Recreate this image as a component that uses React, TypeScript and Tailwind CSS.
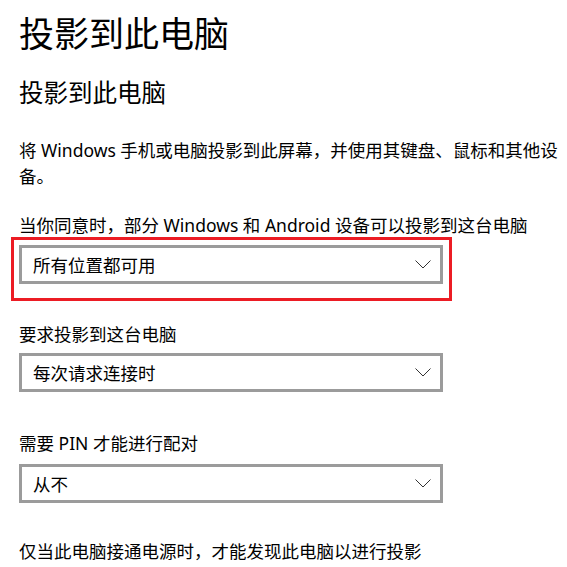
import React from "react";

const font = { fontFamily: '"Noto Sans", "Noto Sans CJK SC", sans-serif' };

function Chevron() {
  return (
    <svg width="16" height="9" viewBox="0 0 16 9" fill="none" className="shrink-0">
      <path d="M0.5 0.5 L8 8 L15.5 0.5" stroke="#333" strokeWidth="1" />
    </svg>
  );
}

function Select({ value }: { value: string }) {
  return (
    <div className="w-[424px] h-[39px] border-[3px] border-[#9b9b9b] bg-white flex items-center justify-between pl-[11px] pr-[9px]">
      <span className="text-[17.5px] leading-[26px] text-black">{value}</span>
      <Chevron />
    </div>
  );
}

export default function App() {
  return (
    <div className="w-[567px] h-[567px] bg-white overflow-hidden pl-[19px] text-black" style={font}>
      <div className="pt-[12px] text-[35px] leading-[44px] whitespace-nowrap">投影到此电脑</div>
      <div className="mt-[20px] text-[24.5px] leading-[34px] whitespace-nowrap">投影到此电脑</div>
      <div className="mt-[27px] text-[17.5px] leading-[26px]">
        <div className="whitespace-nowrap">将 Windows 手机或电脑投影到此屏幕，并使用其键盘、鼠标和其他设</div>
        <div className="whitespace-nowrap">备。</div>
      </div>
      <div className="mt-[23px] text-[17.5px] leading-[26px] whitespace-nowrap">
        当你同意时，部分 Windows 和 Android 设备可以投影到这台电脑
      </div>
      <div className="-mt-[1px] -ml-[8px] w-[441px] border-[3px] border-[#ec1c24] pt-[5px] pb-[14px] pl-[5px] pr-[6px]">
        <Select value="所有位置都可用" />
      </div>
      <div className="mt-[20px] text-[17.5px] leading-[26px] whitespace-nowrap">要求投影到这台电脑</div>
      <div className="mt-[6px]">
        <Select value="每次请求连接时" />
      </div>
      <div className="mt-[38px] text-[17.5px] leading-[26px] whitespace-nowrap">需要 PIN 才能进行配对</div>
      <div className="mt-[8px]">
        <Select value="从不" />
      </div>
      <div className="mt-[35px] text-[17.5px] leading-[26px] whitespace-nowrap">
        仅当此电脑接通电源时，才能发现此电脑以进行投影
      </div>
    </div>
  );
}
